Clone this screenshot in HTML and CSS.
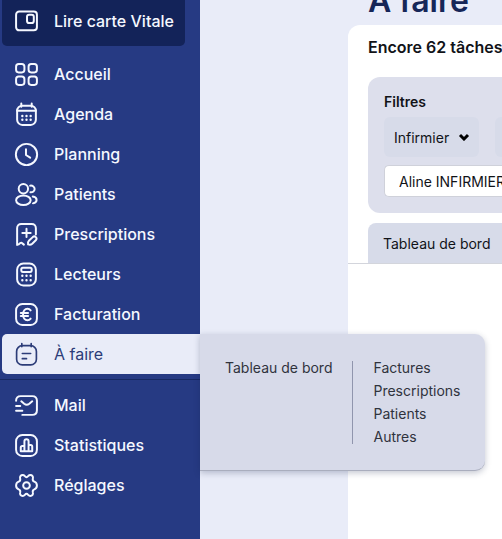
FILE: index.html
```html
<!DOCTYPE html>
<html lang="fr">
  <head>
    <meta charset="UTF-8" />
    <meta name="viewport" content="width=device-width, initial-scale=1.0" />
    <title>À faire</title>
    <link rel="stylesheet" href="styles.css">
  </head>
  <body>
    <nav class="sidebar">
      <button class="card-button" type="button">
        <svg class="icon" viewBox="0 0 24 24"><rect x="2" y="2.5" width="20" height="18" rx="3" /><rect x="12.5" y="5.5" width="6.5" height="8" rx="2" /></svg>
        Lire carte Vitale
      </button>
      <ul class="menu">
        <li class="item">
          <a class="link" href="#">
            <svg class="icon" viewBox="0 0 24 24"><rect x="2" y="2" width="8" height="8" rx="2.5" /><rect x="14" y="2" width="8" height="8" rx="2.5" /><rect x="2" y="14" width="8" height="8" rx="2.5" /><rect x="14" y="14" width="8" height="8" rx="2.5" /></svg>
            Accueil
          </a>
        </li>
        <li class="item">
          <a class="link" href="#">
            <svg class="icon" viewBox="0 0 24 24"><rect x="3" y="3.5" width="18" height="18.5" rx="5" /><path d="M7 1.5v3M17 1.5v3M3 8.5h18" /><path class="dots" d="M8 13.5h.01M12 13.5h.01M16 13.5h.01M8 17h.01M12 17h.01M16 17h.01" /></svg>
            Agenda
          </a>
        </li>
        <li class="item">
          <a class="link" href="#">
            <svg class="icon" viewBox="0 0 24 24"><circle cx="12" cy="12" r="10.2" /><path d="M11.5 7v5.5l4 2.500" /></svg>
            Planning
          </a>
        </li>
        <li class="item">
          <a class="link" href="#">
            <svg class="icon" viewBox="0 0 24 24"><circle cx="9" cy="6.5" r="4.5" /><ellipse cx="9" cy="17.5" rx="7" ry="4.5" /><path d="M15.5 3.5c2.500-.3 4.300 1.200 4.300 3.200s-1.800 3.500-4 3.200M18 14c2.300.4 3.700 1.600 3.700 3.200s-1.300 2.800-3.500 3.300" /></svg>
            Patients
          </a>
        </li>
        <li class="item">
          <a class="link" href="#">
            <svg class="icon" viewBox="0 0 24 24"><path d="M21 12V6c0-2.500-1.500-4-4-4H7C4.500 2 3 3.500 3 6v16l1.500-.5C6 20 7 19.500 8 20.500l1.500 1.200M12 6.500v8M8 10.500h8" /><path d="M13.500 21.500c-.4-1.500 0-2.700 1-3.700l3.500-3.300c1-.9 2.200-.8 3 0s.8 2-.1 3l-3.400 3.300c-1.100 1-2.400 1.200-4 .7z" /></svg>
            Prescriptions
          </a>
        </li>
        <li class="item">
          <a class="link" href="#">
            <svg class="icon" viewBox="0 0 24 24"><rect x="3" y="1.5" width="18" height="21" rx="6" /><rect x="7" y="5.5" width="10" height="4" rx="1.5" /><path class="dots" d="M8 13.200h.01M12 13.200h.01M16 13.200h.01M8 17.500h.01M12 17.500h.01M16 17.500h.01" /></svg>
            Lecteurs
          </a>
        </li>
        <li class="item">
          <a class="link" href="#">
            <svg class="icon" viewBox="0 0 24 24"><rect x="2" y="2" width="20" height="20" rx="6" /><path d="M16 8c-.8-1-1.800-1.500-3-1.500-2.600 0-4.300 2.300-4.300 5.500s1.700 5.500 4.300 5.500c1.200 0 2.200-.5 3-1.500M6.500 10.500h7M6.500 13.500h7" /></svg>
            Facturation
          </a>
        </li>
        <li class="item">
          <a class="link active" href="#">
            <svg class="icon" viewBox="0 0 24 24"><rect x="2.5" y="3.5" width="19" height="18.5" rx="5.5" /><path d="M7.500 1.500v3M16.500 1.500v3M8 11h8M8 16h4" /></svg>
            À faire
          </a>
          <div class="submenu">
            <a class="submenu-link" href="#">Tableau de bord</a>
            <div class="submenu-list">
              <a class="submenu-link" href="#">Factures</a>
              <a class="submenu-link" href="#">Prescriptions</a>
              <a class="submenu-link" href="#">Patients</a>
              <a class="submenu-link" href="#">Autres</a>
            </div>
          </div>
        </li>
      </ul>
      <ul class="menu secondary">
        <li class="item">
          <a class="link" href="#">
            <svg class="icon" viewBox="0 0 24 24"><path d="M2 7.500C2 4.500 3.500 3 6.500 3h11C20.500 3 22 4.500 22 7.500v9c0 3-1.500 4.500-4.500 4.500H8M2 12.500h4M2 17h6M7 8l2.800 2.400c1.500 1.200 3.400 1.200 4.900 0L17.500 8" /></svg>
            Mail
          </a>
        </li>
        <li class="item">
          <a class="link" href="#">
            <svg class="icon" viewBox="0 0 24 24"><rect x="2" y="2" width="20" height="20" rx="6" /><path d="M10 17.500H6.500V14c0-1 .5-1.500 1.500-1.500h2M10 17.500V8c0-1.300.7-2 2-2s2 .7 2 2v9.500zM14 11.500h2c1 0 1.500.5 1.500 1.500v4.500H14" /></svg>
            Statistiques
          </a>
        </li>
        <li class="item">
          <a class="link" href="#">
            <svg class="icon" viewBox="0 0 24 24"><circle cx="12" cy="12" r="3.2" /><path d="M12 4C13.600 4 13.600 2 15.600 2C17.600 2 18.600 3.400 18.100 5.200C17.700 6.900 18.100 7.800 19.500 8.300C21.200 8.900 22 10.200 22 12C22 13.800 21.200 15.100 19.500 15.700C18.100 16.200 17.700 17.100 18.100 18.800C18.600 20.600 17.600 22 15.600 22C13.600 22 13.600 20 12 20C10.400 20 10.400 22 8.400 22C6.400 22 5.400 20.600 5.900 18.800C6.300 17.100 5.900 16.200 4.500 15.700C2.800 15.100 2 13.800 2 12C2 10.200 2.800 8.900 4.500 8.300C5.900 7.800 6.300 6.900 5.900 5.200C5.400 3.400 6.400 2 8.400 2C10.400 2 10.400 4 12 4z" /></svg>
            Réglages
          </a>
        </li>
      </ul>
    </nav>

    <main class="page">
      <h1 class="title">À faire</h1>
      <section class="panel">
        <p class="summary">Encore 62 tâches</p>
        <form class="filters">
          <h2 class="filters-title">Filtres</h2>
          <div class="selects">
            <div class="select-box">
              <select class="select" aria-label="Filtrer par rôle">
                <option>Infirmier</option>
              </select>
              <svg class="chevron" viewBox="0 0 12 8"><path d="M2 2l4 4 4-4" /></svg>
            </div>
            <div class="select-box next"></div>
          </div>
          <input class="field" type="text" value="Aline INFIRMIER" aria-label="Infirmier" />
        </form>
        <div class="tabs">
          <button class="tab" type="button">Tableau de bord</button>
        </div>
      </section>
    </main>
  </body>
</html>
```

FILE: styles.css
```css
* {
  box-sizing: border-box;
  margin: 0;
  padding: 0;
}

body {
  display: flex;
  min-height: 100vh;
  overflow: hidden;
  background-color: #e9ecf8;
  font-family: Inter, 'Liberation Sans', sans-serif;
  font-size: 14px;
  color: #111318;
}

button,
input,
select {
  font: inherit;
  color: inherit;
  border: none;
}

a {
  color: inherit;
  text-decoration: none;
}

.sidebar {
  flex: none;
  width: 200px;
  background-color: #263a83;
  color: #f5f8ff;
}

.card-button,
.link {
  display: flex;
  align-items: center;
  gap: 15px;
  padding-left: 12px;
  font-size: 16px;
  font-weight: 450;
  white-space: nowrap;
}

.card-button {
  width: 183px;
  height: 50px;
  margin: -4px 0 8px 2px;
  border-radius: 5px;
  background-color: #132359;
}

.menu {
  list-style: none;
  padding-left: 2px;
}

.secondary {
  margin-top: 5px;
  padding-top: 5px;
  border-top: 1px solid #172861;
}

.item {
  position: relative;
}

.link {
  height: 40px;
}

.active {
  border-radius: 5px 0 0 5px;
  background-color: #e9ecf8;
  color: #2c3c78;
  font-weight: 400;
}

.icon {
  flex: none;
  width: 25px;
  height: 25px;
  fill: none;
  stroke: currentColor;
  stroke-width: 1.9;
  stroke-linecap: round;
  stroke-linejoin: round;
}

.active .icon {
  stroke-width: 1.6;
}

.dots {
  stroke-width: 2.3;
}

/* flyout next to the active entry */
.submenu {
  position: absolute;
  top: 0;
  left: 100%;
  display: flex;
  gap: 20px;
  padding: 27px 25px 26px;
  border-bottom: 1px solid #a9adbd;
  border-radius: 0 10px 10px 0;
  background-color: #d7dae9;
  box-shadow: 0 2px 6px rgba(20, 30, 70, 0.25);
  color: #30333d;
  line-height: 14px;
  white-space: nowrap;
}

.submenu-list {
  display: flex;
  flex-direction: column;
  gap: 9px;
  padding-left: 20px;
  border-left: 1px solid #9095ad;
}

.page {
  flex: 1;
  display: flex;
  flex-direction: column;
  min-width: 0;
  padding-left: 148px;
}

.title {
  margin: -19px 0 4px 20px;
  color: #162658;
  font-size: 32px;
  font-weight: 600;
  line-height: 40px;
}

.panel {
  flex: 1;
  padding-top: 12px;
  border-top-left-radius: 12px;
  background-color: #fff;
}

.summary {
  margin: 0 0 20px 20px;
  font-size: 16px;
  font-weight: 600;
  line-height: 20px;
  white-space: nowrap;
}

.filters {
  margin-left: 20px;
  padding: 16px 0 16px 16px;
  border-radius: 12px 0 0 12px;
  background-color: #dddfec;
}

.filters-title {
  margin-bottom: 6px;
  font-size: 14px;
  font-weight: 600;
  line-height: 18px;
}

.selects {
  display: flex;
  gap: 16px;
  margin-bottom: 8px;
}

.select-box {
  position: relative;
  flex: none;
  height: 40px;
  border-radius: 6px;
  background-color: #d7dbe9;
}

.next {
  flex: 1;
  border-radius: 6px 0 0 6px;
}

.select {
  width: 95px;
  height: 100%;
  padding-left: 10px;
  appearance: none;
  background: none;
}

.chevron {
  position: absolute;
  top: 16px;
  right: 9px;
  width: 12px;
  height: 8px;
  fill: none;
  stroke: #000;
  stroke-width: 3;
  pointer-events: none;
}

.field {
  display: block;
  width: 100%;
  height: 32px;
  padding-left: 14px;
  border: 1px solid #cfd1da;
  border-right: none;
  border-radius: 5px 0 0 5px;
  background-color: #fff;
}

.tabs {
  margin-top: 10px;
  padding-left: 20px;
  border-bottom: 1px solid #d3d5dc;
}

.tab {
  display: block;
  width: 100%;
  height: 40px;
  padding-left: 15px;
  border-radius: 8px 0 0 0;
  background-color: #d7dbe9;
  text-align: left;
  white-space: nowrap;
}
```
